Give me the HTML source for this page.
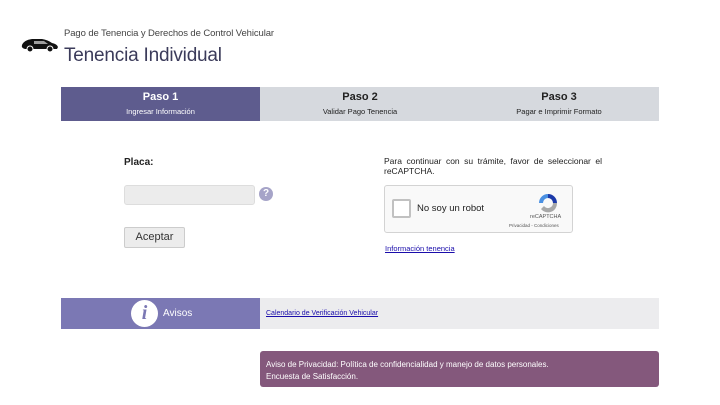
<!DOCTYPE html>
<html><head><meta charset="utf-8"><style>
*{margin:0;padding:0;box-sizing:border-box}
body{width:720px;height:405px;background:#fff;font-family:"Liberation Sans",sans-serif;position:relative;overflow:hidden;color:#222}
.a{position:absolute}
</style></head><body>
<svg class="a" style="left:20px;top:36px" width="40" height="18" viewBox="0 0 40 18"><path d="M2 9 Q4 4 12 3 L22 3 Q28 4 32 7 Q37 8 38 11 L37 13 L5 13 Q1 12 2 9Z" fill="#111"/><circle cx="10" cy="13" r="3" fill="#111" stroke="#fff" stroke-width="1"/><circle cx="30" cy="13" r="3" fill="#111" stroke="#fff" stroke-width="1"/><path d="M14 5 L24 5 L28 8 L14 8Z" fill="#fff" opacity=".6"/></svg>
<div class="a" style="left:64px;top:28px;font-size:9.5px;color:#444;letter-spacing:-0.1px">Pago de Tenencia y Derechos de Control Vehicular</div>
<div class="a" style="left:64px;top:45px;font-size:19px;color:#3b3b5a;letter-spacing:-0.2px">Tenencia Individual</div>
<div class="a" style="left:61px;top:87px;width:199px;height:34px;background:#5e5c8e;color:#fff;text-align:center"><div style="font-size:11px;font-weight:bold;margin-top:4px">Paso 1</div><div style="font-size:7.5px;margin-top:4px">Ingresar Información</div></div>
<div class="a" style="left:260px;top:87px;width:399px;height:34px;background:#d6d9de"></div>
<div class="a" style="left:260px;top:87px;width:200px;height:34px;color:#222;text-align:center"><div style="font-size:11px;font-weight:bold;margin-top:4px">Paso 2</div><div style="font-size:7.5px;margin-top:4px">Validar Pago Tenencia</div></div>
<div class="a" style="left:459px;top:87px;width:200px;height:34px;color:#222;text-align:center"><div style="font-size:11px;font-weight:bold;margin-top:4px">Paso 3</div><div style="font-size:7.5px;margin-top:4px">Pagar e Imprimir Formato</div></div>
<div class="a" style="left:124px;top:157px;font-size:10px;font-weight:bold">Placa:</div>
<div class="a" style="left:124px;top:185px;width:131px;height:20px;background:#ececec;border:1px solid #ddd;border-radius:3px"></div>
<div class="a" style="left:259px;top:187px;width:14px;height:14px;border-radius:50%;background:#a6a4c8;color:#fff;font-size:10px;font-weight:bold;text-align:center;line-height:14px">?</div>
<div class="a" style="left:124px;top:227px;width:61px;height:21px;background:#ececec;border:1px solid #ccc;border-radius:2px;font-size:11px;text-align:center;line-height:19px;color:#333">Aceptar</div>
<div class="a" style="left:384px;top:156px;width:218px;font-size:8.5px;text-align:justify;text-align-last:left;line-height:10px;color:#222">Para continuar con su trámite, favor de seleccionar el reCAPTCHA.</div>
<div class="a" style="left:384px;top:185px;width:189px;height:48px;background:#f9f9f9;border:1px solid #d3d3d3;border-radius:3px">
<div class="a" style="left:7px;top:13px;width:19px;height:19px;border:2px solid #c1c1c1;background:#fff;border-radius:2px"></div>
<div class="a" style="left:32px;top:17px;font-size:9.5px;color:#222">No soy un robot</div>
<svg class="a" style="left:152px;top:6px" width="22" height="22" viewBox="0 0 22 22"><path d="M11 2 A9 9 0 0 1 20 11 L16 11 A5 5 0 0 0 11 6Z" fill="#1c3aa9"/><path d="M20 11 A9 9 0 0 1 4 17 L7 14 A5 5 0 0 0 16 11Z" fill="#a8a8a8"/><path d="M2 11 A9 9 0 0 1 11 2 L11 6 A5 5 0 0 0 6 11Z" fill="#4a90e2"/></svg>
<div class="a" style="left:145px;top:28px;font-size:5.5px;color:#555">reCAPTCHA</div>
<div class="a" style="left:124px;top:37px;font-size:4.5px;color:#555">Privacidad - Condiciones</div>
</div>
<div class="a" style="left:385px;top:244px;font-size:7.5px;color:#1a0dab;text-decoration:underline">Información tenencia</div>
<div class="a" style="left:61px;top:298px;width:199px;height:31px;background:#7b78b4"></div>
<div class="a" style="left:260px;top:298px;width:399px;height:31px;background:#ececee"></div>
<div class="a" style="left:131px;top:300px;width:27px;height:27px;border-radius:50%;background:#fff;color:#7b78b4;font-family:'Liberation Serif',serif;font-style:italic;font-weight:bold;font-size:20px;text-align:center;line-height:27px">i</div>
<div class="a" style="left:163px;top:308px;font-size:10px;color:#fff">Avisos</div>
<div class="a" style="left:266px;top:310px;font-size:7px;color:#1a0dab;text-decoration:underline">Calendario de Verificación Vehicular</div>
<div class="a" style="left:260px;top:351px;width:399px;height:36px;background:#84587c;border-radius:3px;color:#fff;font-size:8px;line-height:12px;padding:8px 0 0 6px">Aviso de Privacidad: Política de confidencialidad y manejo de datos personales.<br>Encuesta de Satisfacción.</div>
</body></html>
